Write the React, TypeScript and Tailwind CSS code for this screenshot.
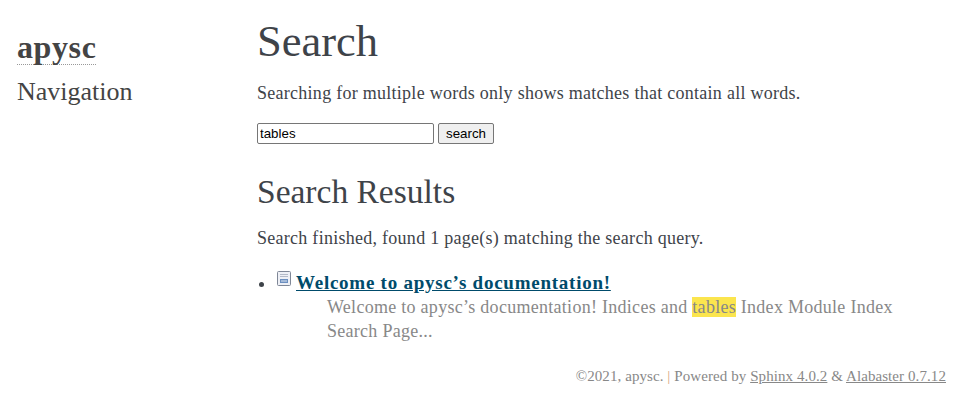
export default function App() {
  return (
    <div className="flex h-[408px] w-[978px] overflow-hidden bg-white font-['Liberation_Serif',serif] text-[18px] text-[#3e4349]">
      {/* sidebar */}
      <div className="w-[257px] shrink-0 pl-[17px] pt-[30px]">
        <div>
          <a href="#" className="inline-block h-[35px] border-b border-dotted border-[#999] text-[32px] font-bold leading-[35px] tracking-[0.6px] text-[#444]">
            apysc
          </a>
        </div>
        <h3 className="mt-[8px] text-[26px] leading-[36px] text-[#444]">Navigation</h3>
      </div>

      {/* main */}
      <div className="w-[700px] pt-[14px]">
        <h1 className="text-[44.5px] leading-[54px]">Search</h1>
        <p className="mt-[12px] text-[18px] leading-[26px] tracking-[0.27px]">
          Searching for multiple words only shows matches that contain all words.
        </p>
        <form className="mt-[17px] flex gap-[4px] font-['Liberation_Sans',sans-serif] text-[13.33px] text-black">
          <input
            readOnly
            value="tables"
            className="h-[21px] w-[177px] rounded-[2px] border border-[#767676] px-[2px] outline-none"
          />
          <button className="h-[21px] w-[56px] rounded-[2px] border border-[#767676] bg-[#efefef]">search</button>
        </form>
        <h2 className="mt-[28px] text-[33.5px] leading-[40px]">Search Results</h2>
        <p className="mt-[13px] text-[18px] leading-[26px] tracking-[0.27px]">
          Search finished, found 1 page(s) matching the search query.
        </p>
        <ul className="mt-[18px]">
          <li className="flex">
            <span className="ml-[2px] mr-[13px] mt-[13px] h-[5px] w-[5px] rounded-full bg-[#3e4349]" />
            <div>
              <div className="flex h-[26px] items-start">
                <svg width="15" height="16" viewBox="0 0 15 16" className="mr-[4px] mt-[2px]">
                  <rect x="0.5" y="0.5" width="13" height="14" rx="1" fill="#eef0f6" stroke="#7f8797" />
                  <path d="M3 3.5h8M3 5.5h8" stroke="#b4bac8" />
                  <rect x="3" y="8" width="8" height="4" fill="#6b8fc0" />
                  <path d="M4 10h6" stroke="#dfe6f2" />
                </svg>
                <a href="#" className="text-[19px] font-bold tracking-[0.75px] text-[#004b6b] underline">
                  Welcome to apysc’s documentation!
                </a>
              </div>
              <div className="ml-[50px] w-[580px] leading-[24px] tracking-[0.28px] text-[#888]">
                Welcome to apysc’s documentation! Indices and <span className="bg-[#fbe54e]">tables</span> Index Module Index Search Page...
              </div>
            </div>
          </li>
        </ul>
        <div className="mt-[22px] w-[689px] text-right text-[15px] tracking-[0.08px] text-[#888]">
          ©2021, apysc. <span className="text-[#d8a878]">|</span> Powered by <a href="#" className="underline">Sphinx 4.0.2</a> &amp; <a href="#" className="underline">Alabaster 0.7.12</a>
        </div>
      </div>
    </div>
  );
}
